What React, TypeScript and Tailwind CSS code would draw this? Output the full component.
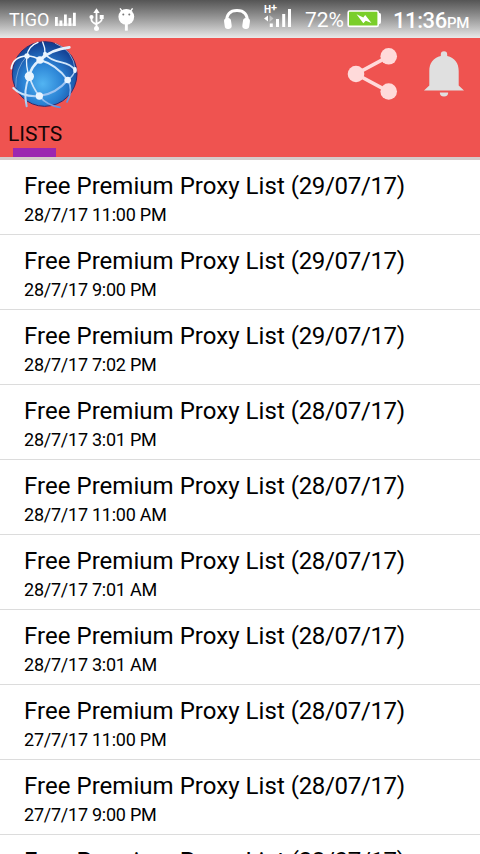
const posts = [
  { title: 'Free Premium Proxy List', date: '(29/07/17)', time: '28/7/17 11:00 PM' },
  { title: 'Free Premium Proxy List', date: '(29/07/17)', time: '28/7/17 9:00 PM' },
  { title: 'Free Premium Proxy List', date: '(29/07/17)', time: '28/7/17 7:02 PM' },
  { title: 'Free Premium Proxy List', date: '(28/07/17)', time: '28/7/17 3:01 PM' },
  { title: 'Free Premium Proxy List', date: '(28/07/17)', time: '28/7/17 11:00 AM' },
  { title: 'Free Premium Proxy List', date: '(28/07/17)', time: '28/7/17 7:01 AM' },
  { title: 'Free Premium Proxy List', date: '(28/07/17)', time: '28/7/17 3:01 AM' },
  { title: 'Free Premium Proxy List', date: '(28/07/17)', time: '27/7/17 11:00 PM' },
  { title: 'Free Premium Proxy List', date: '(28/07/17)', time: '27/7/17 9:00 PM' },
  { title: 'Free Premium Proxy List', date: '(28/07/17)', time: '27/7/17 7:00 PM' },
]

function EqualizerIcon() {
  return (
    <svg className="ml-[5px] w-[22px] h-[38px] shrink-0" viewBox="54 0 22 38" fill="#fff">
      <path d="M55 17h2.800v9H55zM59.500 20.500h2.800V26h-2.800zM64 14.500h2.800V26H64zM68.500 18h2.800v8h-2.800zM73 12.700h2.800V26H73z" />
      <path d="M55 23.500h20.500V26H55z" opacity=".5" />
    </svg>
  )
}

function UsbIcon() {
  return (
    <svg className="ml-[13px] w-[16px] h-[38px] shrink-0" viewBox="89 0 16 38" fill="none" stroke="#fff" strokeWidth="1.8">
      <path d="M96.500 11v17M91.500 17v3q0 2 5 4.500M101.700 16v3.500q0 2-5.200 4.500" />
      <path d="M96.500 8.300l3.200 4.700h-6.400z" fill="#fff" stroke="none" />
      <circle cx="96.500" cy="28.400" r="2.500" fill="#fff" stroke="none" />
      <circle cx="91.500" cy="17" r="2.100" fill="#fff" stroke="none" />
      <path d="M99.700 15h4v4h-4z" fill="#fff" stroke="none" />
    </svg>
  )
}

function AndroidIcon() {
  return (
    <svg className="ml-[12px] w-[20px] h-[38px] shrink-0" viewBox="117 0 20 38">
      <path d="M120 8.300l2.700 3.700M132.600 8.300l-2.700 3.700" stroke="#fff" strokeWidth="1.400" />
      <circle cx="126.300" cy="16.800" r="7.900" fill="#fff" />
      <path d="M124.900 24h2.900v6.700h-2.900z" fill="#fff" />
      <circle cx="123.300" cy="14.400" r="1" fill="#777" />
      <circle cx="129.300" cy="14.400" r="1" fill="#777" />
    </svg>
  )
}

function HeadphonesIcon() {
  return (
    <svg className="ml-auto w-[28px] h-[38px] shrink-0" viewBox="223 0 28 38">
      <path d="M227 22c-1-7.500 3-11.500 10-11.500s11 4 10 11.500" fill="none" stroke="#fff" strokeWidth="3" />
      <rect x="224.300" y="18" width="7" height="11" rx="3.200" fill="#fff" transform="rotate(-8 228 23)" />
      <rect x="242.700" y="18" width="7" height="11" rx="3.200" fill="#fff" transform="rotate(8 246 23)" />
    </svg>
  )
}

function SignalIcon() {
  return (
    <div className="relative ml-[12px] w-[30px] h-[38px] shrink-0">
      <svg className="w-[30px] h-[38px]" viewBox="263 0 30 38" fill="#fff">
        <path d="M269.800 23.500h3V27h-3zM276 19h3v8h-3zM282.200 14h3v13h-3zM288 9h3v18h-3z" />
        <path d="M264 18.500l4-3v6z" />
        <path d="M273.500 18.500l-4-3.500v7z" opacity=".4" />
      </svg>
      <span className="absolute left-[1px] top-[4px] text-[10px] leading-[12px] font-bold">H</span>
      <span className="absolute left-[8px] top-[2px] text-[11px] leading-[12px] font-bold">+</span>
    </div>
  )
}

function BatteryIcon() {
  return (
    <svg className="ml-[2px] w-[34px] h-[38px] shrink-0" viewBox="347 0 34 38">
      <path d="M378 13h1.500q1.500 0 1.500 2v7q0 2-1.500 2H378z" fill="#fff" />
      <rect x="348.200" y="11" width="30" height="15.400" rx="1.500" fill="#7ace2a" stroke="#fff" strokeWidth="1.600" />
      <path d="M356.500 14.200l6.800 3.300 1.900-2.600 6.300 8.200-5.700-2.300-2.500 2.500z" fill="#fff" />
    </svg>
  )
}

function StatusBar() {
  return (
    <div className="flex items-center h-[38px] pl-[9px] pr-[11px] text-white bg-linear-to-b from-[#555] to-[#e9e9e9]">
      <span className="w-[40px] shrink-0 pt-[1px] text-[18px]">TIGO</span>
      <EqualizerIcon />
      <UsbIcon />
      <AndroidIcon />
      <HeadphonesIcon />
      <SignalIcon />
      <span className="ml-[12px] w-[40px] shrink-0 pt-[3px] text-[21px] whitespace-nowrap">72%</span>
      <BatteryIcon />
      <div className="ml-[12px] w-[76px] shrink-0 pt-[2px] flex items-baseline font-medium">
        <span className="w-[54px] text-[22px] tracking-[-0.4px]">11:36</span>
        <span className="text-[15px] tracking-[-0.3px]">PM</span>
      </div>
    </div>
  )
}

function GlobeLogo() {
  return (
    <svg className="w-[72px] h-[74px] shrink-0" viewBox="0 0 216 222" fill="none">
      <defs>
        <radialGradient id="globe" cx="47%" cy="65%" r="62%">
          <stop offset="0" stopColor="#52b4f2" />
          <stop offset="0.5" stopColor="#2a82d4" />
          <stop offset="1" stopColor="#123f92" />
        </radialGradient>
        <linearGradient id="web" x1="50" y1="20" x2="160" y2="215" gradientUnits="userSpaceOnUse">
          <stop offset="0" stopColor="#fff" />
          <stop offset="0.6" stopColor="#c5e0fa" />
          <stop offset="1" stopColor="#4b88e0" />
        </linearGradient>
      </defs>
      <circle cx="110" cy="108" r="97" fill="url(#globe)" stroke="#2b2a70" strokeWidth="3" />
      <g stroke="url(#web)" strokeLinecap="round">
        <path d="M10 92Q14 56 57 54q22 0 39 12" strokeWidth="5" />
        <path d="M64 115q5-30 32-49 36-33 88-38" strokeWidth="8" />
        <path d="M104 12q8 18 7 35l-15 19" strokeWidth="4" />
        <path d="M111 47q12 18 50 26 28 6 40 23" strokeWidth="5" />
        <path d="M96 66q50 14 83 60" strokeWidth="6" />
        <path d="M57 54Q60 24 90 13" strokeWidth="4" />
        <path d="M57 54q-5 30 7 61" strokeWidth="4" />
        <path d="M57 54Q22 90 23 148" strokeWidth="3" opacity=".4" />
        <path d="M142 16q54 20 60 80" strokeWidth="3" opacity=".55" />
        <path d="M64 115q10 35 30 59" strokeWidth="5" />
        <path d="M64 115q-19 42-8 90" strokeWidth="6" />
        <path d="M16 150q26 28 78 24 50-6 85-48" strokeWidth="6" />
        <path d="M94 174q22 28 62 34" strokeWidth="5" />
        <path d="M179 126q18-12 22-30" strokeWidth="4" />
        <path d="M179 126q18 28-2 66" strokeWidth="5" />
      </g>
      <g fill="#eaf5ff">
        <circle cx="64" cy="115" r="14" />
        <circle cx="96" cy="66" r="11" />
        <circle cx="94" cy="174" r="11" />
        <circle cx="179" cy="126" r="10" />
        <circle cx="57" cy="54" r="8" />
        <ellipse cx="201" cy="96" rx="5.500" ry="9" />
        <circle cx="111" cy="47" r="6" />
      </g>
    </svg>
  )
}

function ShareIcon() {
  return (
    <svg className="w-[54px] h-[74px] shrink-0" viewBox="346 38 54 74" fill="#ffdada">
      <path d="M388.700 56.300L356 74l32.700 17.700" fill="none" stroke="#ffdada" strokeWidth="3.600" />
      <circle cx="388.700" cy="56.300" r="8.300" />
      <circle cx="356" cy="74" r="8.300" />
      <circle cx="388.700" cy="91.500" r="8.300" />
    </svg>
  )
}

function BellIcon() {
  return (
    <svg className="ml-[22px] w-[44px] h-[74px] shrink-0" viewBox="422 38 44 74" fill="#e0e0e0">
      <path d="M440.800 56v-1.500a3.200 3.200 0 016.400 0V56c7.500 1.800 11.500 7 11.500 15v14.500l5.300 5h-40l5.300-5V71c0-8 4-13.200 11.500-15z" />
      <path d="M439.800 92.500h8.400a4.200 4 0 01-8.400 0z" />
    </svg>
  )
}

function Header() {
  return (
    <header className="h-[122px] bg-[#ef5350] border-b-[3px] border-[#d5cbca]">
      <div className="flex items-center justify-between h-[74px] pl-[8px] pr-[14px]">
        <GlobeLogo />
        <div className="flex">
          <ShareIcon />
          <BellIcon />
        </div>
      </div>
      <div className="flex flex-col h-[45px] w-[69px] pl-[8px] pt-[10px] text-[21px] leading-[24px] text-[#140606]">
        <span className="h-[26px]">LISTS</span>
        <div className="ml-[5px] mt-auto w-[43px] h-[9px] bg-[#9c27b0]" />
      </div>
    </header>
  )
}

function App() {
  return (
    <div className="w-[480px] h-[854px] overflow-hidden bg-white text-black font-['Roboto',sans-serif]">
      <StatusBar />
      <Header />
      <ul>
        {posts.map((post, index) => (
          <li key={index} className="h-[75px] pl-[24px] pt-[12px] border-b border-[#dcdcdc]">
            <h2 className="text-[24px] leading-[28px] tracking-[0.04px]">
              {post.title} <span className="tracking-[-0.33px]">{post.date}</span>
            </h2>
            <p className="mt-[4px] text-[18px] leading-[21px] tracking-[-0.24px]">{post.time}</p>
          </li>
        ))}
      </ul>
    </div>
  )
}

export default App
